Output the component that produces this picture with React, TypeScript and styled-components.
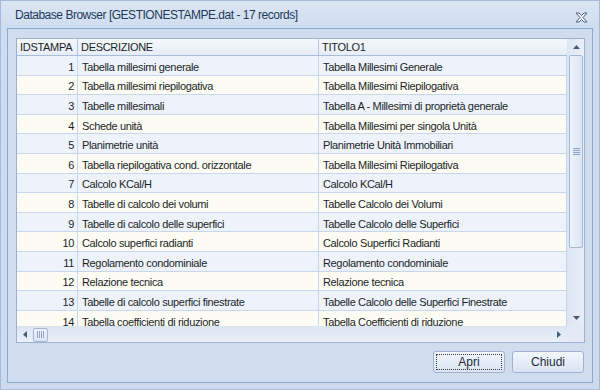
import React from "react";
import styled, { createGlobalStyle } from "styled-components";

const Global = createGlobalStyle`
  html, body { margin: 0; padding: 0; background: #cedcef; }
  * { box-sizing: border-box; }
`;

const Window = styled.div`
  width: 600px;
  height: 390px;
  display: flex;
  flex-direction: column;
  background: linear-gradient(#dbe6f4 0px, #cddcef 30px, #cbdaee 100%);
  border: 1px solid #a7bbd8;
  font-family: "Liberation Sans", Arial, sans-serif;
  color: #1b1f27;
  overflow: hidden;
`;

const TitleBar = styled.div`
  height: 27px;
  flex: none;
  display: flex;
  align-items: center;
  padding: 1px 10px 0 14px;
`;

const Title = styled.div`
  flex: 1;
  font-size: 12px;
  color: #1e395b;
  letter-spacing: -0.48px;
`;

const CloseBtn = styled.div`
  width: 16px;
  height: 14px;
  display: flex;
  align-items: center;
  justify-content: center;
  margin-top: 4px;
`;

const Client = styled.div`
  flex: 1;
  margin: 0 6px 6px 6px;
  border: 1px solid #8fa7c9;
  background: #cfddef;
  display: flex;
  flex-direction: column;
  padding: 9px 7px 8px 8px;
  gap: 8px;
`;

const Grid = styled.div`
  height: 305px;
  flex: none;
  border: 1px solid #9db2d1;
  background: #ffffff;
  display: grid;
  grid-template-columns: 1fr 17px;
  grid-template-rows: 1fr 16px;
  overflow: hidden;
`;

const Viewport = styled.div`
  overflow: hidden;
  display: flex;
  flex-direction: column;
`;

const COLS = "61px 241px 248px";

const HeaderRow = styled.div`
  flex: none;
  height: 17px;
  display: grid;
  grid-template-columns: ${COLS};
  background: linear-gradient(#f5f8fc, #e6edf7);
  border-bottom: 1px solid #a9bcd9;
`;

const HeaderCell = styled.div<{ $last?: boolean }>`
  font-size: 11px;
  letter-spacing: -0.3px;
  line-height: 16px;
  padding: 0 3px;
  white-space: nowrap;
  overflow: hidden;
  border-right: ${(p) => (p.$last ? "none" : "1px solid #b5c7e1")};
  color: #1b1f27;
`;

const Row = styled.div<{ $alt: boolean }>`
  flex: none;
  height: 19.6px;
  display: grid;
  grid-template-columns: ${COLS};
  background: ${(p) => (p.$alt ? "#fcfcf4" : "#eef3fb")};
  border-bottom: 1px solid #c8d7ee;
`;

const Cell = styled.div<{ $right?: boolean }>`
  font-size: 11px;
  letter-spacing: -0.35px;
  display: flex;
  align-items: center;
  justify-content: ${(p) => (p.$right ? "flex-end" : "flex-start")};
  padding: 3px 3px 0 4px;
  white-space: nowrap;
  overflow: hidden;
  border-right: 1px solid #c8d7ee;
`;

const VScroll = styled.div`
  display: flex;
  flex-direction: column;
  background: linear-gradient(90deg, #dde6f3, #e9eff8);
  border-left: 1px solid #dbe4f1;
`;

const HScroll = styled.div`
  display: flex;
  align-items: center;
  background: linear-gradient(#dde6f3, #e9eff8);
  border-top: 1px solid #dbe4f1;
`;

const Corner = styled.div`
  background: #e3eaf5;
`;

const ArrowBox = styled.div<{ $w: number; $h: number }>`
  flex: none;
  width: ${(p) => p.$w}px;
  height: ${(p) => p.$h}px;
  display: flex;
  align-items: center;
  justify-content: center;
`;

const VThumb = styled.div`
  flex: none;
  height: 193px;
  margin: 0 1px;
  border: 1px solid #a3b7d5;
  border-radius: 2px;
  background: linear-gradient(90deg, #eef3fa, #dbe5f3);
  display: flex;
  align-items: center;
  justify-content: center;
`;

const HThumb = styled.div`
  flex: none;
  width: 15px;
  height: 14px;
  border: 1px solid #a3b7d5;
  border-radius: 2px;
  background: linear-gradient(#eef3fa, #dbe5f3);
  display: flex;
  align-items: center;
  justify-content: center;
`;

const Spacer = styled.div`
  flex: 1;
`;

const Buttons = styled.div`
  display: flex;
  justify-content: flex-end;
  gap: 7px;
  padding-right: 1px;
`;

const Button = styled.div<{ $focus?: boolean }>`
  position: relative;
  width: 72px;
  height: 22px;
  border: 1px solid #9fb3d1;
  border-radius: 3px;
  background: linear-gradient(#f4f7fc 0%, #e7eef8 50%, #d9e4f3 100%);
  font-size: 12px;
  display: flex;
  align-items: center;
  justify-content: center;
  color: #1e2a3b;
  &::after {
    content: "";
    display: ${(p) => (p.$focus ? "block" : "none")};
    position: absolute;
    inset: 2px;
    border: 1px dotted #3a3a3a;
  }
`;

const rows: [number, string, string][] = [
  [1, "Tabella millesimi generale", "Tabella Millesimi Generale"],
  [2, "Tabella millesimi riepilogativa", "Tabella Millesimi Riepilogativa"],
  [3, "Tabelle millesimali", "Tabella A - Millesimi di proprietà generale"],
  [4, "Schede unità", "Tabella Millesimi per singola Unità"],
  [5, "Planimetrie unità", "Planimetrie Unità Immobiliari"],
  [6, "Tabella riepilogativa cond. orizzontale", "Tabella Millesimi Riepilogativa"],
  [7, "Calcolo KCal/H", "Calcolo KCal/H"],
  [8, "Tabelle di calcolo dei volumi", "Tabelle Calcolo dei Volumi"],
  [9, "Tabelle di calcolo delle superfici", "Tabelle Calcolo delle Superfici"],
  [10, "Calcolo superfici radianti", "Calcolo Superfici Radianti"],
  [11, "Regolamento condominiale", "Regolamento condominiale"],
  [12, "Relazione tecnica", "Relazione tecnica"],
  [13, "Tabelle di calcolo superfici finestrate", "Tabelle Calcolo delle Superfici Finestrate"],
  [14, "Tabella coefficienti di riduzione", "Tabella Coefficienti di riduzione"],
];

const Tri = ({ dir }: { dir: "up" | "down" | "left" | "right" }) => {
  const pts: Record<string, string> = {
    up: "0,4 7,4 3.5,0",
    down: "0,0 7,0 3.5,4",
    left: "4,0 4,7 0,3.5",
    right: "0,0 0,7 4,3.5",
  };
  const vert = dir === "up" || dir === "down";
  return (
    <svg width={vert ? 7 : 4} height={vert ? 4 : 7} viewBox={vert ? "0 0 7 4" : "0 0 4 7"}>
      <polygon points={pts[dir]} fill="#46597a" />
    </svg>
  );
};

const Grip = ({ vertical }: { vertical?: boolean }) =>
  vertical ? (
    <svg width="7" height="7" viewBox="0 0 7 7">
      {[0, 2, 4, 6].map((y) => (
        <rect key={y} x="0" y={y} width="7" height="1" fill="#8fa3c2" />
      ))}
    </svg>
  ) : (
    <svg width="7" height="7" viewBox="0 0 7 7">
      {[0, 2, 4, 6].map((x) => (
        <rect key={x} x={x} y="0" width="1" height="7" fill="#8fa3c2" />
      ))}
    </svg>
  );

const CloseIcon = () => (
  <svg width="13" height="11" viewBox="0 0 13 11">
    <path
      d="M1 1 L4 1 L6.5 3.5 L9 1 L12 1 L8 5.5 L12 10 L9 10 L6.5 7.5 L4 10 L1 10 L5 5.5 Z"
      fill="#f4f7fb"
      stroke="#4d5f7e"
      strokeWidth="1"
      strokeLinejoin="round"
    />
  </svg>
);

export default function App() {
  return (
    <>
      <Global />
      <Window>
        <TitleBar>
          <Title>Database Browser [GESTIONESTAMPE.dat - 17 records]</Title>
          <CloseBtn>
            <CloseIcon />
          </CloseBtn>
        </TitleBar>
        <Client>
          <Grid>
            <Viewport>
              <HeaderRow>
                <HeaderCell>IDSTAMPA</HeaderCell>
                <HeaderCell>DESCRIZIONE</HeaderCell>
                <HeaderCell $last>TITOLO1</HeaderCell>
              </HeaderRow>
              {rows.map(([id, d, t], i) => (
                <Row key={id} $alt={i % 2 === 1}>
                  <Cell $right>{id}</Cell>
                  <Cell>{d}</Cell>
                  <Cell>{t}</Cell>
                </Row>
              ))}
            </Viewport>
            <VScroll>
              <ArrowBox $w={16} $h={16}>
                <Tri dir="up" />
              </ArrowBox>
              <VThumb>
                <Grip vertical />
              </VThumb>
              <Spacer />
              <ArrowBox $w={16} $h={17}>
                <Tri dir="down" />
              </ArrowBox>
            </VScroll>
            <HScroll>
              <ArrowBox $w={16} $h={15}>
                <Tri dir="left" />
              </ArrowBox>
              <HThumb>
                <Grip />
              </HThumb>
              <Spacer />
              <ArrowBox $w={16} $h={15}>
                <Tri dir="right" />
              </ArrowBox>
            </HScroll>
            <Corner />
          </Grid>
          <Buttons>
            <Button $focus>Apri</Button>
            <Button>Chiudi</Button>
          </Buttons>
        </Client>
      </Window>
    </>
  );
}
